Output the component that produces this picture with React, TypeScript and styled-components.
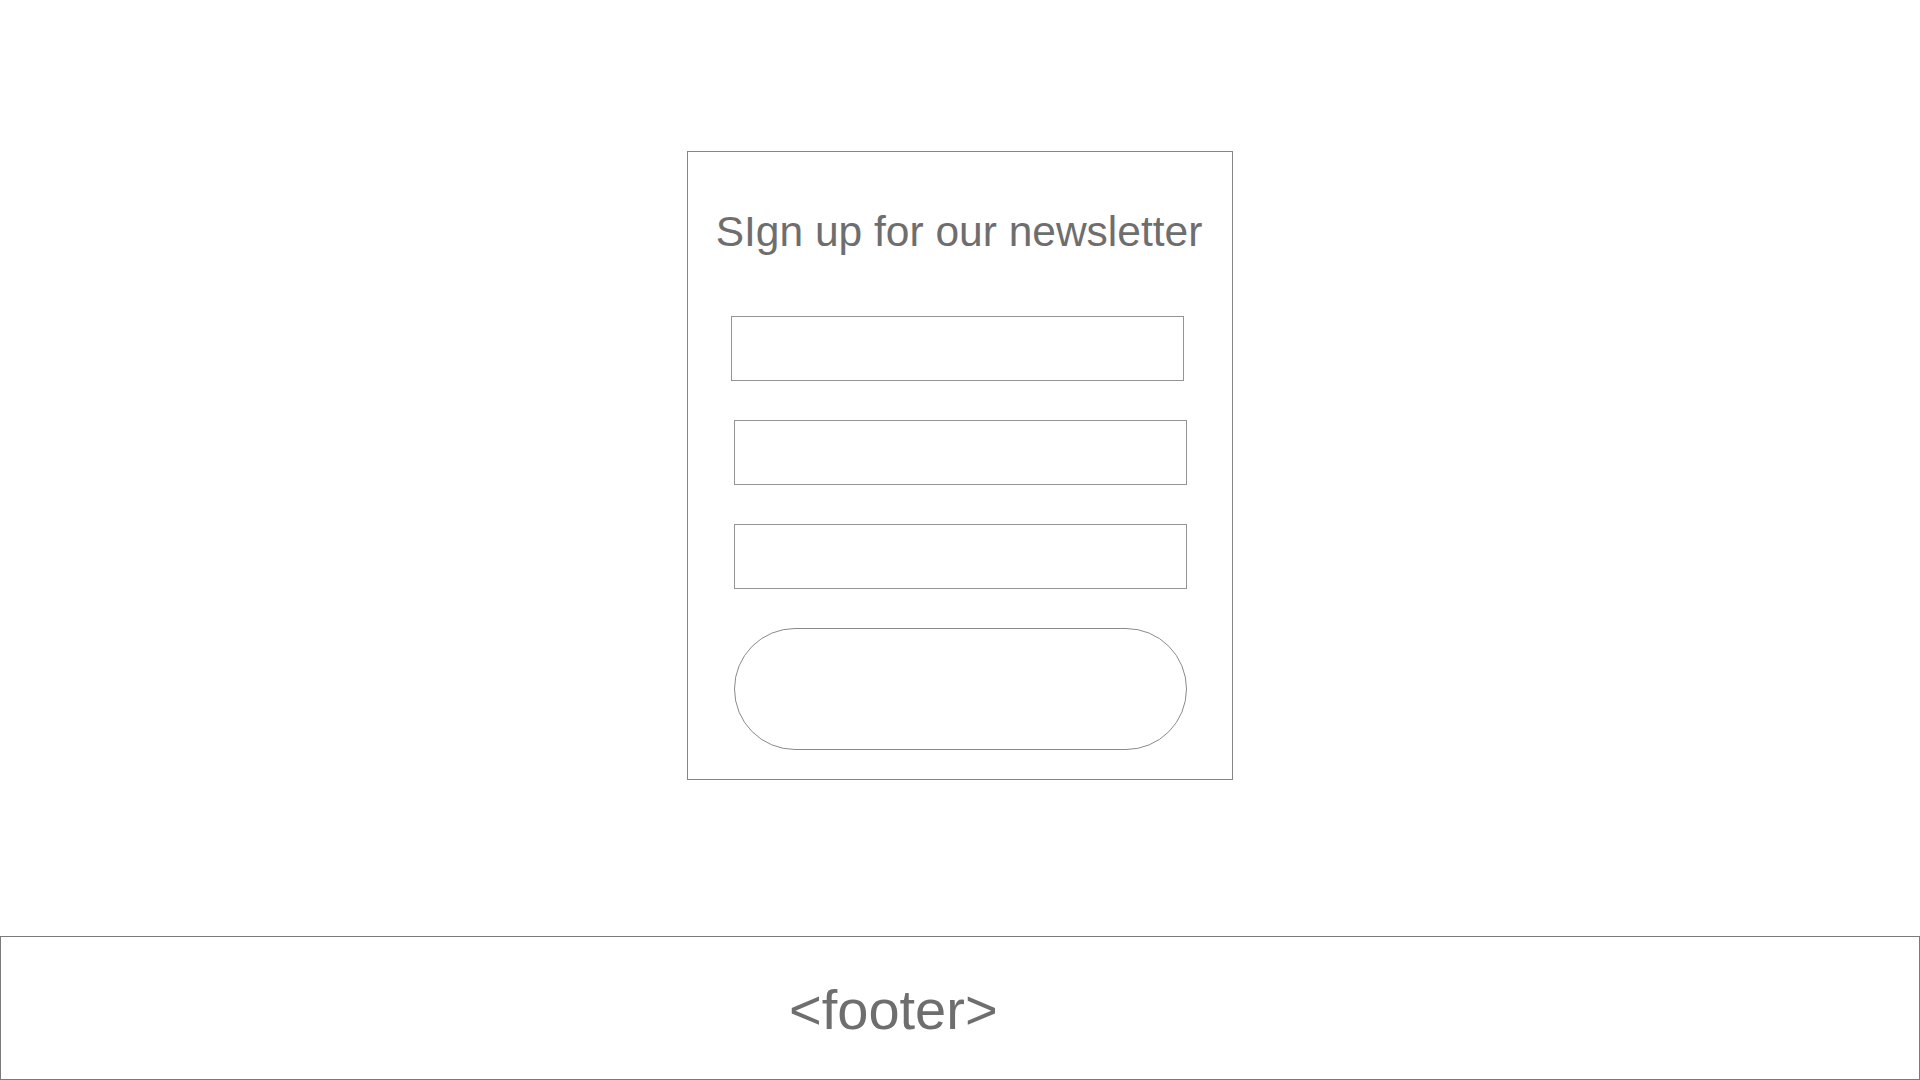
import React from "react";
import styled, { createGlobalStyle } from "styled-components";

const GlobalStyle = createGlobalStyle`
  html, body {
    margin: 0;
    padding: 0;
    background: #ffffff;
  }
  body {
    font-family: "Liberation Sans", Arial, Helvetica, sans-serif;
  }
  * {
    box-sizing: border-box;
  }
`;

const Page = styled.div`
  width: 1920px;
  height: 1080px;
  display: flex;
  flex-direction: column;
  background: #ffffff;
`;

const Main = styled.main`
  flex: 0 0 936px;
  display: flex;
  justify-content: center;
  align-items: flex-start;
  padding-top: 151px;
`;

const Card = styled.form`
  width: 546px;
  height: 629px;
  border: 1px solid #858585;
  display: flex;
  flex-direction: column;
  align-items: center;
  padding-top: 59px;
`;

const Title = styled.h1`
  margin: 0 0 63px 0;
  position: relative;
  left: -1px;
  font-family: "Liberation Sans", Arial, Helvetica, sans-serif;
  font-weight: 400;
  font-size: 42.5px;
  line-height: 42px;
  color: #6e6e6e;
  white-space: nowrap;
`;

const Field = styled.div<{ $nudge?: number }>`
  width: 453px;
  height: 65px;
  border: 1px solid #949494;
  background: #ffffff;
  margin-bottom: 39px;
  position: relative;
  left: ${(p) => p.$nudge ?? 0}px;
`;

const SubmitButton = styled.div`
  width: 453px;
  height: 122px;
  border: 1px solid #8a8a8a;
  border-radius: 61px;
  background: #ffffff;
`;

const Footer = styled.footer`
  flex: 0 0 144px;
  width: 1920px;
  border: 1px solid #7a7a7a;
  display: flex;
  align-items: flex-start;
  padding-top: 45px;
  padding-left: 788px;
`;

const FooterText = styled.span`
  font-family: "Liberation Sans", Arial, Helvetica, sans-serif;
  font-size: 56px;
  line-height: 56px;
  color: #6e6e6e;
`;

export default function App() {
  return (
    <>
      <GlobalStyle />
      <Page>
        <Main>
          <Card onSubmit={(e) => e.preventDefault()}>
            <Title>SIgn up for our newsletter</Title>
            <Field $nudge={-3} />
            <Field />
            <Field />
            <SubmitButton />
          </Card>
        </Main>
        <Footer>
          <FooterText>&lt;footer&gt;</FooterText>
        </Footer>
      </Page>
    </>
  );
}
